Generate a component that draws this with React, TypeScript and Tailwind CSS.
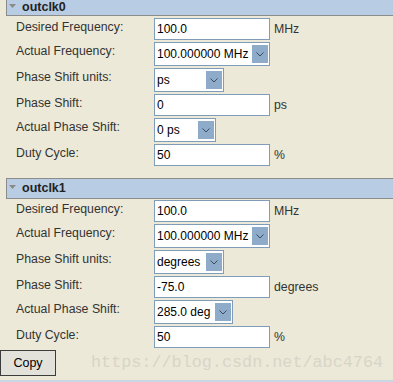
import React from 'react';

type Row =
    | { label: string; kind: 'input'; value: string; unit?: string }
    | { label: string; kind: 'select'; value: string; width: string };

const Chevron = () => (
    <svg width="8" height="5" viewBox="0 0 8 5" className="block">
        <polyline points="0.5,0.5 4,4 7.5,0.5" fill="none" stroke="#3b4a5c" strokeWidth="1" />
    </svg>
);

const Field = ({ row }: { row: Row }) => {
    if (row.kind === 'input') {
        return (
            <div className="flex items-center">
                <div className="w-[116px] h-[22px] border border-[#7f9db9] bg-white flex items-center pl-[2px] text-black text-[12px]">{row.value}</div>
                {row.unit && <span className="ml-[4px] text-[#333]">{row.unit}</span>}
            </div>
        );
    }
    return (
        <div className={`${row.width} h-[24px] border border-[#7f9db9] bg-white flex items-center p-[2px] pr-[1px]`}>
            <span className="flex-1 text-black text-[12px] whitespace-nowrap overflow-hidden">{row.value}</span>
            <span className="w-[16px] h-full bg-[#8eabc9] flex items-center justify-center shrink-0">
                <Chevron />
            </span>
        </div>
    );
};

const Section = ({ rows }: { rows: Row[] }) => (
    <div className="flex flex-col gap-[2px]">
        {rows.map(row => (
            <div key={row.label} className="flex items-start">
                <div className="w-[154px] pl-[16px] pt-[2px] leading-[14px] text-[#333]">{row.label}</div>
                <Field row={row} />
            </div>
        ))}
    </div>
);

const Header = ({ title, first }: { title: string; first?: boolean }) => (
    <div className={`ml-[6px] bg-[#b8cde3] border-l border-b border-[#8c8c8c] flex items-center ${first ? 'h-[16px]' : 'h-[21px] border-t'}`}>
        <svg width="7" height="4" viewBox="0 0 7 4" className="ml-[2px] mr-[6px] -mt-[3px]">
            <polygon points="0,0 7,0 3.5,4" fill="#8a8a8a" />
        </svg>
        <span className="font-bold text-[12.5px] text-[#222]">{title}</span>
    </div>
);

const clk0: Row[] = [
    { label: 'Desired Frequency:', kind: 'input', value: '100.0', unit: 'MHz' },
    { label: 'Actual Frequency:', kind: 'select', value: '100.000000 MHz', width: 'w-[116px]' },
    { label: 'Phase Shift units:', kind: 'select', value: 'ps', width: 'w-[70px]' },
    { label: 'Phase Shift:', kind: 'input', value: '0', unit: 'ps' },
    { label: 'Actual Phase Shift:', kind: 'select', value: '0 ps', width: 'w-[62px]' },
    { label: 'Duty Cycle:', kind: 'input', value: '50', unit: '%' },
];

const clk1: Row[] = [
    { label: 'Desired Frequency:', kind: 'input', value: '100.0', unit: 'MHz' },
    { label: 'Actual Frequency:', kind: 'select', value: '100.000000 MHz', width: 'w-[116px]' },
    { label: 'Phase Shift units:', kind: 'select', value: 'degrees', width: 'w-[70px]' },
    { label: 'Phase Shift:', kind: 'input', value: '-75.0', unit: 'degrees' },
    { label: 'Actual Phase Shift:', kind: 'select', value: '285.0 deg', width: 'w-[79px]' },
    { label: 'Duty Cycle:', kind: 'input', value: '50', unit: '%' },
];

export default function App() {
    return (
        <div className="relative w-[393px] h-[382px] overflow-hidden bg-[#ece9d8] font-['Liberation_Sans',Arial,sans-serif] text-[12.3px]">
            <Header title="outclk0" first />
            <div className="pt-[2px]">
                <Section rows={clk0} />
            </div>
            <div className="mt-[12px]">
                <Header title="outclk1" />
            </div>
            <div className="pt-[1px]">
                <Section rows={clk1} />
            </div>
            <button className="mt-[2px] w-[56px] h-[26px] border border-[#3c3c3c] bg-[#e3e2da] text-black text-[12.5px] flex items-center justify-center">Copy</button>
            <div className="mt-[4px] h-[2px] bg-[#c9d6e3]" />
            <div className="absolute left-[91px] top-[354px] font-['Liberation_Mono',monospace] text-[16.8px] leading-[18px] text-[#d8d5c7] pointer-events-none whitespace-nowrap">
                https://blog.csdn.net/abc4764
            </div>
        </div>
    );
}
